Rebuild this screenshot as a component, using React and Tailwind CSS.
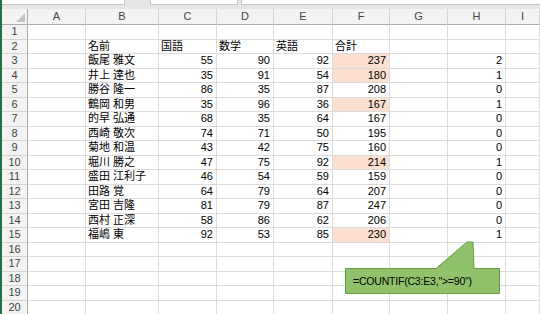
import React from "react";

const cols = ["A", "B", "C", "D", "E", "F", "G", "H", "I"];

const people = [
    ["飯尾 雅文", 55, 90, 92, 237, 2],
    ["井上 達也", 35, 91, 54, 180, 1],
    ["勝谷 隆一", 86, 35, 87, 208, 0],
    ["鶴岡 和男", 35, 96, 36, 167, 1],
    ["的早 弘通", 68, 35, 64, 167, 0],
    ["西崎 敬次", 74, 71, 50, 195, 0],
    ["菊地 和温", 43, 42, 75, 160, 0],
    ["堀川 勝之", 47, 75, 92, 214, 1],
    ["盛田 江利子", 46, 54, 59, 159, 0],
    ["田路 覚", 64, 79, 64, 207, 0],
    ["宮田 吉隆", 81, 79, 87, 247, 0],
    ["西村 正深", 58, 86, 62, 206, 0],
    ["福嶋 東", 92, 53, 85, 230, 1],
];

// builds the 20 rows of cells A..I
const buildRows = () => {
    const rows = [];
    for (let r = 1; r <= 20; r++) {
        const cells = Array(9).fill(null);
        if (r === 2) {
            cells[1] = {text: "名前"};
            cells[2] = {text: "国語"};
            cells[3] = {text: "数学"};
            cells[4] = {text: "英語"};
            cells[5] = {text: "合計"};
        }
        const p = people[r - 3];
        if (p) {
            cells[1] = {text: p[0]};
            cells[2] = {text: p[1], num: true};
            cells[3] = {text: p[2], num: true};
            cells[4] = {text: p[3], num: true};
            cells[5] = {text: p[4], num: true, hl: p[5] > 0};
            cells[7] = {text: p[5], num: true};
        }
        rows.push(cells);
    }
    return rows;
};

const font = {fontFamily: "'Liberation Sans', 'Noto Sans CJK JP', sans-serif"};

function Cell({cell}) {
    if (!cell) {
        return <div className="border-r border-b border-[#dcdcdc]" />;
    }
    return (
        <div
            className={
                "border-r border-b border-[#dcdcdc] flex items-center overflow-hidden whitespace-nowrap text-[11px] leading-none text-black " +
                (cell.num ? "justify-end pr-[3px] " : "pl-[2px] ") +
                (cell.hl ? "bg-[#fbdfcf]" : "")
            }
        >
            {cell.text}
        </div>
    );
}

export default function App() {
    const rows = buildRows();

    return (
        <div className="relative w-[540px] h-[314px] overflow-hidden bg-white border-l-2 border-[#217346]" style={font}>
            <div className="h-[9px] bg-[#e6e6e6] flex items-start">
                <div className="w-[123px] h-[5px] bg-white border-b border-r border-[#c6c6c6]" />
                <div className="w-[25px]" />
                <div className="w-[88px] h-[5px] bg-white border-b border-l border-r border-[#c6c6c6]" />
                <div className="w-[3px]" />
                <div className="flex-1 h-[5px] bg-white border-b border-l border-[#c6c6c6]" />
            </div>

            <div className="grid grid-cols-[26px_58px_73px_58px_57px_59px_57px_58px_58px_1fr] grid-rows-[16px_repeat(20,14.5px)]">
                <div className="relative bg-[#f3f3f3] border-r border-b border-[#ababab]">
                    <svg className="absolute right-[2px] bottom-[2px]" width="9" height="9" viewBox="0 0 9 9">
                        <polygon points="9,0 9,9 0,9" fill="#c4c4c4" />
                    </svg>
                </div>
                {cols.map((c) => (
                    <div
                        key={c}
                        className="bg-[#f3f3f3] border-r border-b border-r-[#d4d4d4] border-b-[#ababab] flex items-center justify-center text-[11px] leading-none text-[#444]"
                    >
                        {c}
                    </div>
                ))}

                {rows.map((cells, i) => (
                    <React.Fragment key={i}>
                        <div className="bg-[#f3f3f3] border-r border-b border-r-[#ababab] border-b-[#d4d4d4] flex items-center justify-center text-[11px] leading-none text-[#444]">
                            {i + 1}
                        </div>
                        {cells.map((cell, j) => (
                            <Cell key={j} cell={cell} />
                        ))}
                    </React.Fragment>
                ))}
            </div>

            <svg className="absolute left-[-2px] top-0" width="540" height="314" viewBox="0 0 540 314">
                <path
                    d="M345.5,268.5 H436 L467,242 H473 L474,268.5 H499.5 V293.5 H345.5 Z"
                    fill="#8fc26a"
                    stroke="#6a9c47"
                    strokeWidth="1"
                />
            </svg>
            <div className="absolute left-[351px] top-[276px] text-[10.5px] tracking-[-0.2px] leading-none text-black whitespace-nowrap">
                =COUNTIF(C3:E3,"&gt;=90")
            </div>
        </div>
    );
}
